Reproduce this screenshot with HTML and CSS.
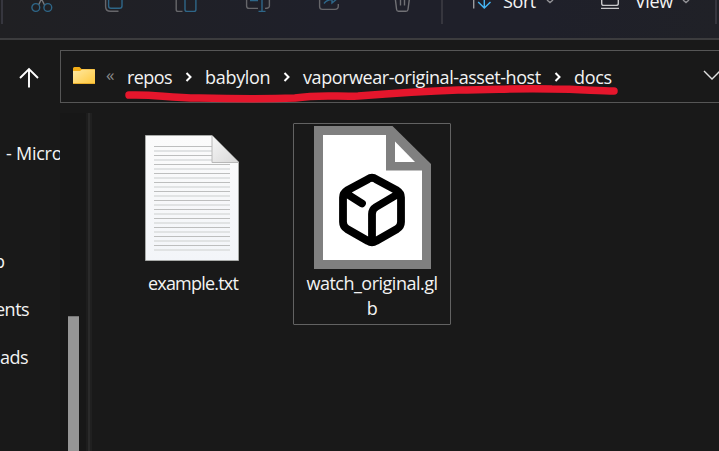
FILE: index.html
```html
<!DOCTYPE html>
<html lang="en">
<head>
<meta charset="utf-8">
<title>docs</title>
<link rel="stylesheet" href="styles.css">
</head>
<body>
<div class="window">
  <header class="toolbar">
    <span class="divider divider-start"></span>
    <svg class="tool cut" viewBox="0 0 24 16" width="24" height="16"><path d="M8.500 5 13 -4M14.500 5 10-4" stroke="#77777b"/><circle cx="5.800" cy="7.500" r="3.900" stroke="#2e6688"/><circle cx="17.800" cy="7.500" r="3.900" stroke="#2e6688"/></svg>
    <svg class="tool copy" viewBox="0 0 24 16" width="24" height="16"><path d="M3.600-2V6.500Q3.600 11.300 8.500 11.300H16.500" stroke="#66666a"/><path d="M6.600-2V6Q6.600 8.300 9 8.300H17.500Q20 8.300 20 6V-2" stroke="#2e6688"/></svg>
    <svg class="tool paste" viewBox="0 0 24 16" width="24" height="16"><path d="M2.200-2V9.500Q2.200 11.400 4 11.400H8.500" stroke="#66666a"/><path d="M11-1V9.500Q11 11.400 13 11.400H20Q21.900 11.400 21.900 9.500V-1" stroke="#2e6688"/></svg>
    <svg class="tool rename" viewBox="0 0 26 16" width="26" height="16"><path d="M1.600-2V6Q1.600 8.400 4 8.400H13M20 8.400Q24.400 8.400 24.400 6V-2" stroke="#66666a"/><path d="M5 .5H13M17-2V11.400M13.500 11.400H20.500" stroke="#2e6688"/></svg>
    <svg class="tool share" viewBox="0 0 24 16" width="24" height="16"><path d="M1.600-2V6.500Q1.600 9.400 4.500 9.400H17Q20.300 9.400 20.300 6V4" stroke="#66666a"/><path d="M6 3.500Q9-.5 14-.5V3L20-2" stroke="#2e6688"/></svg>
    <svg class="tool trash" viewBox="0 0 24 16" width="24" height="16"><path d="M4.200-2 5.600 9.500Q5.800 11.300 7.500 11.300H15Q16.800 11.300 17 9.500L18.500-2M9.500-2V5.500M13.500-2V5.500" stroke="#717175"/></svg>
    <span class="divider divider-mid"></span>
    <svg class="tool sort-icon" viewBox="0 0 22 16" width="22" height="16"><path d="M2.700-2V8.600" stroke="#9b9b9e"/><path d="M13.300-2V7.800M7.200 2 13.300 8 19.500 2" stroke="#45b5f4"/></svg>
    <span class="command sort">Sort</span>
    <svg class="tool caret" viewBox="0 0 8 5" width="8" height="5"><path d="M1 0 4 2.500 7 0" stroke="#929296"/></svg>
    <svg class="tool view-icon" viewBox="0 0 20 16" width="20" height="16"><path d="M1.700-2V3.500Q1.700 5.400 3.700 5.400H16Q18.300 5.400 18.300 3.500V-2M1 8.400H19" stroke="#c7c7c9"/></svg>
    <span class="command view">View</span>
    <svg class="tool caret" viewBox="0 0 8 5" width="8" height="5"><path d="M1 0 4 2.500 7 0" stroke="#929296"/></svg>
    <span class="divider divider-end"></span>
  </header>

  <nav class="location">
    <svg class="up" viewBox="0 0 22 22" width="22" height="22"><path d="M11 20.500V2M2 11 11 2 20 11"/></svg>
    <div class="address">
      <svg class="folder" viewBox="0 0 22 18" width="22" height="18">
        <defs><linearGradient id="folder" x2="1" y2="1"><stop stop-color="#ffe9a2"/><stop offset="1" stop-color="#ffc83c"/></linearGradient></defs>
        <path d="M0 1.500Q0 0 1.500 0H6.500L8.500 2H21Q22 2 22 3V10H0Z" fill="#f4ae17"/><path d="M0 4H7L9 2.500H22V17H0Z" fill="url(#folder)"/><path d="M0 16.500H22" stroke="#e9ae2c"/>
      </svg>
      <span class="overflow">«</span>
      <span class="crumb repos">repos</span>
      <svg class="next" viewBox="0 0 8 10" width="8" height="10"><path d="M1.500 1 5.500 5 1.500 9"/></svg>
      <span class="crumb babylon">babylon</span>
      <svg class="next" viewBox="0 0 8 10" width="8" height="10"><path d="M1.500 1 5.500 5 1.500 9"/></svg>
      <span class="crumb host">vaporwear-original-asset-host</span>
      <svg class="next" viewBox="0 0 8 10" width="8" height="10"><path d="M1.500 1 5.500 5 1.500 9"/></svg>
      <span class="crumb docs">docs</span>
      <svg class="history" viewBox="0 0 18 10" width="18" height="10"><path d="M1 1 9 9 17 1"/></svg>
    </div>
    <svg class="marker" viewBox="0 0 500 24" width="500" height="24"><path d="M8 14C35 13 45 17 78 17C122 18 145 18 174 17C200 13 218 16 237 15C274 12 306 10 337 9C378 9 390 7 431 8C459 8 476 10 493 10"/></svg>
  </nav>

  <div class="body">
    <aside class="sidebar">
      <span class="place micro">- Micro</span>
      <span class="place desktop">p</span>
      <span class="place documents">ents</span>
      <span class="place downloads">ads</span>
    </aside>
    <div class="scrollbar"><div class="thumb"></div></div>
    <div class="splitter"></div>
    <main class="files">
      <div class="file text-file">
        <svg class="page" viewBox="0 0 94 126" width="94" height="126">
          <defs>
            <linearGradient id="paper" x2="0" y2="1"><stop stop-color="#fbfbfb"/><stop offset="1" stop-color="#f3f5f9"/></linearGradient>
            <linearGradient id="fold" x2="1" y2="1"><stop stop-color="#f7f7f7"/><stop offset="1" stop-color="#d7d7d7"/></linearGradient>
            <pattern id="lines" width="100" height="9" y="11" patternUnits="userSpaceOnUse"><rect width="100" height="1" fill="#bdbebe"/><rect y="4" width="100" height="2" fill="#e1e3e4"/></pattern>
          </defs>
          <path d="M.5.5H67L93.500 27V125.500H.5Z" fill="url(#paper)" stroke="#a9aba9"/>
          <path d="M9 11H67V28H85V117H9Z" fill="url(#lines)"/>
          <path d="M67 .5V27.500H93.500Z" fill="url(#fold)"/><path d="M67 1V27.500H93.500" fill="none" stroke="#b8b8b8"/>
        </svg>
        <span class="name">example.txt</span>
      </div>
      <div class="file model-file">
        <svg class="page" viewBox="0 0 117 143" width="117" height="143">
          <path d="M0 0H78.500L117 38V143H0Z" fill="#808080"/><path d="M9 9H72V44.500H108V134H9Z" fill="#fff"/><path d="M81 15.500V36H101Z" fill="#fff"/>
          <path d="M54 53.200Q58 50.300 62 53.200L83 64.500Q87 67 87 71.500V96Q87 100.500 83 103L62 115Q58 117.500 54 115L33 103Q29 100.500 29 96V71.500Q29 67 33 64.500ZM31.500 67 48 77.500M84 68 62 81Q58 83.500 58 88V115" fill="none" stroke="#000" stroke-width="7.800" stroke-linecap="round" stroke-linejoin="round"/>
        </svg>
        <span class="name">watch_original.gl<br>b</span>
      </div>
    </main>
  </div>
</div>
</body>
</html>
```
FILE: styles.css
```css
* { box-sizing: border-box; }
body { margin: 0; background: #191919; color: #f3f3f3; font: 18px/24px "Open Sans", "Noto Sans", sans-serif; overflow: hidden; }
svg { display: block; flex: none; overflow: hidden; }
.window { width: 719px; height: 451px; display: flex; flex-direction: column; overflow: hidden; }
.toolbar { height: 40px; flex: none; display: flex; align-items: flex-start; background: linear-gradient(90deg, #202023, #1f202a 45%, #1f202a 75%, #202127); border-bottom: 2px solid #3c3c3e; overflow: hidden; }
.tool { fill: none; stroke-width: 1.4px; }
.divider { flex: none; width: 2px; height: 24px; background: #36363e; }
.divider-start { margin-left: 1px; }
.cut { margin-left: 27px; }
.copy { margin-left: 48px; }
.paste { margin-left: 48px; }
.rename { margin-left: 47px; }
.share { margin-left: 47px; }
.trash { margin-left: 49px; }
.divider-mid { margin-left: 26px; }
.sort-icon { margin-left: 28px; }
.command { flex: none; white-space: nowrap; margin-top: -11px; letter-spacing: -.4px; }
.sort { width: 34px; margin-left: 10px; }
.caret { margin-left: 9px; }
.view-icon { margin-left: 46px; }
.view { width: 38px; margin-left: 15px; }
.divider-end { margin-left: 25px; }
.location { height: 73px; flex: none; display: flex; align-items: flex-start; position: relative; }
.up { width: 22px; margin: 27px 19px 0 18px; fill: none; stroke: #fff; stroke-width: 1.9px; }
.address { width: 670px; flex: none; margin-top: 10px; height: 53px; border: 1px solid #565656; display: flex; align-items: center; margin-left: 1px; }
.folder { margin-left: 12px; margin-top: -2px; }
.overflow { width: 10px; margin-left: 11px; color: #8b8b8b; font-size: 17px; margin-top: -4px; }
.crumb { flex: none; white-space: nowrap; }
.repos { width: 46px; margin-left: 11px; letter-spacing: -.55px; }
.next { margin: 0 12px; fill: none; stroke: #fff; stroke-width: 2px; }
.babylon { width: 66px; letter-spacing: -.3px; }
.host { width: 239px; letter-spacing: -.43px; }
.docs { width: 39px; letter-spacing: -.3px; }
.history { margin-left: 90px; fill: none; stroke: #e0e0e0; stroke-width: 1.4px; margin-top: -4px; }
.marker { position: absolute; left: 121px; top: 41px; fill: none; stroke: #e5162c; stroke-width: 7.5px; stroke-linecap: round; }
.body { flex: 1; min-height: 0; display: flex; }
.sidebar { width: 60px; flex: none; padding-top: 28px; overflow: hidden; display: flex; flex-direction: column; letter-spacing: -.5px; }
.place { white-space: nowrap; height: 24px; flex: none; }
.micro { padding-left: 6px; letter-spacing: -.25px; }
.desktop { margin-top: 84px; margin-left: -6px; }
.documents { margin-top: 24px; margin-left: -5px; }
.downloads { margin-top: 24px; }
.scrollbar { width: 26px; flex: none; padding: 203px 7px 0 8px; background: #171717; }
.thumb { height: 100%; background: #959595; border-top: 1px solid #767676; }
.splitter { width: 6px; flex: none; border-left: 2px solid #1d1d1d; border-right: 2px solid #202020; background: #2a2a2a; }
.files { flex: 1; display: flex; align-items: flex-start; padding: 10px 0 0 22px; }
.file { width: 158px; height: 202px; flex: none; display: flex; flex-direction: column; align-items: center; border: 1px solid transparent; text-align: center; }
.model-file { margin-left: 21px; border-color: #626262; border-radius: 1px; padding-top: 2px; }
.text-file { padding-top: 11px; }
.text-file .page { margin-right: 2px; }
.name { white-space: nowrap; margin-top: 2px; letter-spacing: -.5px; line-height: 25px; }
.text-file .name { margin-top: 10px; letter-spacing: -.8px; }
```
